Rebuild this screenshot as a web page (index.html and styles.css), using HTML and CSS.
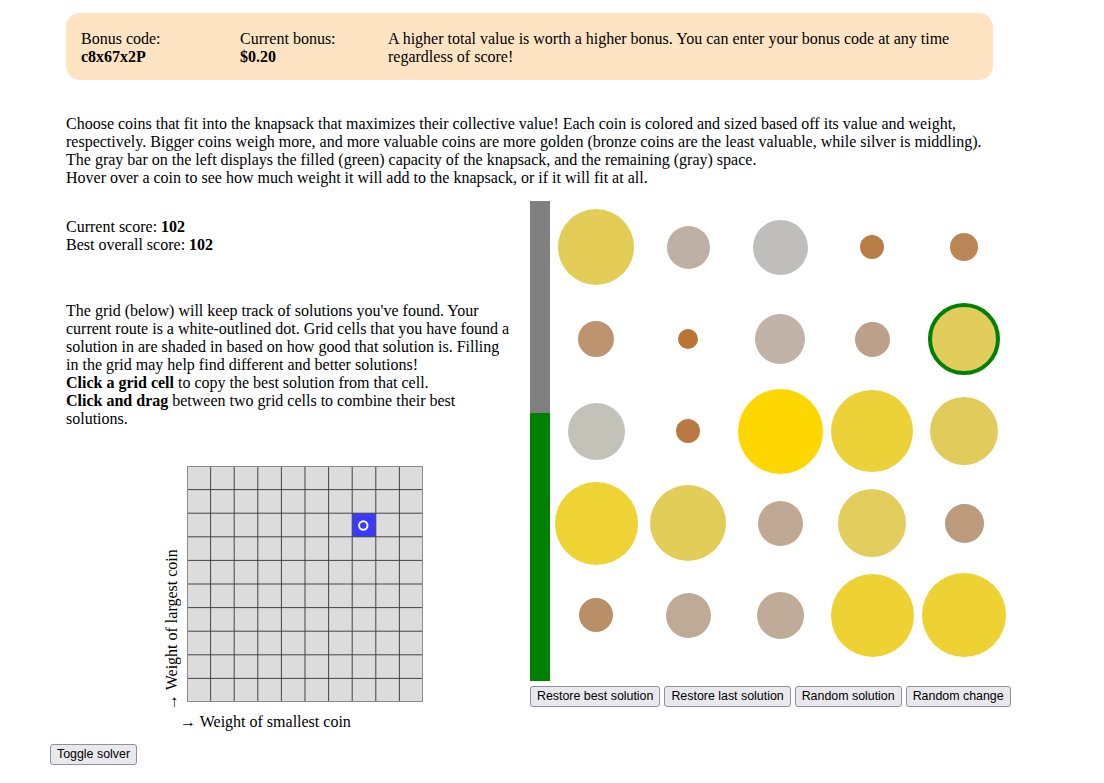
FILE: index.html
```html
<!DOCTYPE html>
<html>
<head>
<meta charset="utf-8">
<link rel="stylesheet" href="styles.css">
</head>
<body>
<div class="page">
  <div class="bonus">
    <div class="bonus-col">Bonus code:<br><b>c8x67x2P</b></div>
    <div class="bonus-col">Current bonus:<br><b>$0.20</b></div>
    <div class="bonus-col">A higher total value is worth a higher bonus. You can enter your bonus code at any time regardless of score!</div>
  </div>

  <p class="intro">Choose coins that fit into the knapsack that maximizes their collective value! Each coin is colored and sized based off its value and weight, respectively. Bigger coins weigh more, and more valuable coins are more golden (bronze coins are the least valuable, while silver is middling). The gray bar on the left displays the filled (green) capacity of the knapsack, and the remaining (gray) space.<br>Hover over a coin to see how much weight it will add to the knapsack, or if it will fit at all.</p>

  <div class="main">
    <div class="left">
      <div class="scores">Current score: <b>102</b><br>Best overall score: <b>102</b></div>
      <p class="help">The grid (below) will keep track of solutions you've found. Your current route is a white-outlined dot. Grid cells that you have found a solution in are shaded in based on how good that solution is. Filling in the grid may help find different and better solutions!<br><b>Click a grid cell</b> to copy the best solution from that cell.<br><b>Click and drag</b> between two grid cells to combine their best solutions.</p>
      <div class="grid-wrap">
        <div class="ylabel">→ Weight of largest coin</div>
        <svg class="solgrid" width="236" height="236" viewBox="0 0 236 236">
          <rect x="0" y="0" width="236" height="236" fill="#dcdcdc"/>
          <rect x="165.2" y="47.2" width="23.6" height="23.6" fill="#3a3aff"/>
          <path d="M23.6 0V236M47.2 0V236M70.8 0V236M94.4 0V236M118 0V236M141.6 0V236M165.2 0V236M188.8 0V236M212.4 0V236M0 23.6H236M0 47.2H236M0 70.8H236M0 94.4H236M0 118H236M0 141.6H236M0 165.2H236M0 188.8H236M0 212.4H236" stroke="#444444" stroke-width="1" fill="none"/>
          <rect x="0.5" y="0.5" width="235" height="235" fill="none" stroke="#8a8a8a" stroke-width="1"/>
          <circle cx="176.3" cy="59.5" r="4.2" fill="none" stroke="#ffffff" stroke-width="2"/>
        </svg>
      </div>
      <div class="xlabel">→ Weight of smallest coin</div>
    </div>

    <div class="right">
      <div class="sack">
        <div class="bar">
          <div class="bar-empty" style="height:212px"></div>
          <div class="bar-full"></div>
        </div>
        <div class="coins">
          <div class="cell"><div class="coin" style="width:76px;height:76px;background:#e3cd57"></div></div>
          <div class="cell"><div class="coin" style="width:43px;height:43px;background:#bfb0a6"></div></div>
          <div class="cell"><div class="coin" style="width:55px;height:55px;background:#c0bebc"></div></div>
          <div class="cell"><div class="coin" style="width:24px;height:24px;background:#b97e47"></div></div>
          <div class="cell"><div class="coin" style="width:28px;height:28px;background:#bb8655"></div></div>

          <div class="cell"><div class="coin" style="width:36px;height:36px;background:#bd9370"></div></div>
          <div class="cell"><div class="coin" style="width:20px;height:20px;background:#b87534"></div></div>
          <div class="cell"><div class="coin" style="width:50px;height:50px;background:#c0b2a6"></div></div>
          <div class="cell"><div class="coin" style="width:35px;height:35px;background:#bda089"></div></div>
          <div class="cell"><div class="coin coin-selected" style="width:72px;height:72px;background:#e2cc5c"></div></div>

          <div class="cell"><div class="coin" style="width:57px;height:57px;background:#c2c2b9"></div></div>
          <div class="cell"><div class="coin" style="width:24px;height:24px;background:#b87a42"></div></div>
          <div class="cell"><div class="coin" style="width:85px;height:85px;background:#fed700"></div></div>
          <div class="cell"><div class="coin" style="width:82px;height:82px;background:#edd138"></div></div>
          <div class="cell"><div class="coin" style="width:68px;height:68px;background:#e1cb5b"></div></div>

          <div class="cell"><div class="coin" style="width:83px;height:83px;background:#efd234"></div></div>
          <div class="cell"><div class="coin" style="width:76px;height:76px;background:#e3cd59"></div></div>
          <div class="cell"><div class="coin" style="width:45px;height:45px;background:#bfa995"></div></div>
          <div class="cell"><div class="coin" style="width:68px;height:68px;background:#e2cd5d"></div></div>
          <div class="cell"><div class="coin" style="width:39px;height:39px;background:#bc9a7c"></div></div>

          <div class="cell"><div class="coin" style="width:34px;height:34px;background:#b98f67"></div></div>
          <div class="cell"><div class="coin" style="width:45px;height:45px;background:#bfaa98"></div></div>
          <div class="cell"><div class="coin" style="width:47px;height:47px;background:#bfab98"></div></div>
          <div class="cell"><div class="coin" style="width:83px;height:83px;background:#eed233"></div></div>
          <div class="cell"><div class="coin" style="width:84px;height:84px;background:#eed233"></div></div>
        </div>
      </div>
      <div class="actions">
        <button class="btn">Restore best solution</button>
        <button class="btn">Restore last solution</button>
        <button class="btn">Random solution</button>
        <button class="btn">Random change</button>
      </div>
    </div>
  </div>
</div>
<button class="btn toggle">Toggle solver</button>
</body>
</html>
```

FILE: styles.css
```css
html, body {
  margin: 0;
  padding: 0;
  background: #ffffff;
}

body {
  font-family: "Liberation Serif", "Times New Roman", serif;
  font-size: 16px;
  line-height: 18px;
  color: #000000;
}

.page {
  margin-left: 66px;
  padding-top: 13px;
}

.bonus {
  width: 927px;
  box-sizing: border-box;
  background: #ffe4c4;
  border-radius: 14px;
  padding: 17px 15px 14px 15px;
  display: grid;
  grid-template-columns: 159px 148px 1fr;
}

.intro {
  width: 927px;
  margin: 35px 0 0 0;
}

.main {
  display: flex;
  align-items: flex-start;
  margin-top: 14px;
}

.left {
  width: 446px;
  flex: none;
}

.scores {
  margin-top: 17px;
}

.help {
  margin: 48px 0 0 0;
}

.grid-wrap {
  display: flex;
  align-items: flex-start;
  margin-top: 38px;
}

.ylabel {
  margin: 8px 0 -8px 97px;
  width: 18px;
  height: 236px;
  writing-mode: vertical-rl;
  transform: rotate(180deg);
  white-space: nowrap;
}

.solgrid {
  display: block;
  margin-left: 6px;
}

.xlabel {
  margin-top: 11px;
  margin-left: 114px;
}

.right {
  margin-left: 18px;
  flex: none;
}

.sack {
  display: flex;
  align-items: flex-start;
}

.bar {
  width: 20px;
  height: 480px;
  display: flex;
  flex-direction: column;
}

.bar-empty {
  background: #808080;
  flex: none;
}

.bar-full {
  background: #008000;
  flex: 1;
}

.coins {
  display: grid;
  grid-template-columns: repeat(5, 92px);
  grid-template-rows: repeat(5, 92px);
}

.cell {
  display: flex;
  align-items: center;
  justify-content: center;
}

.coin {
  border-radius: 50%;
  box-sizing: border-box;
}

.coin-selected {
  border: 4px solid #008000;
}

.actions {
  display: flex;
  gap: 4px;
  margin-top: 5px;
}

.btn {
  font-family: "Liberation Sans", Arial, sans-serif;
  font-size: 12.4px;
  line-height: 15px;
  height: 21px;
  padding: 0 6px;
  margin: 0;
  background: #e9e9ed;
  color: #000000;
  border: 1px solid #8f8f9d;
  border-radius: 3px;
  white-space: nowrap;
}

.toggle {
  margin: 13px 0 0 50px;
  display: block;
}
```
